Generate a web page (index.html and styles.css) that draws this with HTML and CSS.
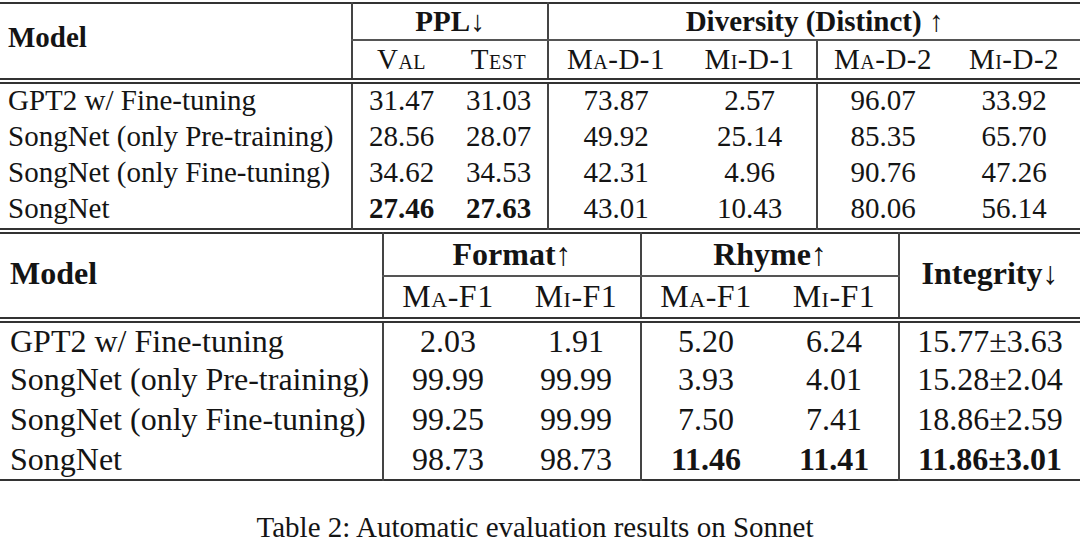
FILE: index.html
```html
<!DOCTYPE html>
<html>
<head>
<meta charset="utf-8">
<link rel="stylesheet" href="styles.css">
</head>
<body>
<div class="page">
  <table class="tbl top">
    <colgroup>
      <col style="width:352px"><col style="width:98px"><col style="width:98px">
      <col style="width:135px"><col style="width:134px"><col style="width:131px"><col style="width:132px">
    </colgroup>
    <tr class="h1">
      <th class="model" rowspan="2">Model</th>
      <th class="vl sub" colspan="2">PPL<span class="arr">↓</span></th>
      <th class="vl sub" colspan="4">Diversity (Distinct) <span class="arr">↑</span></th>
    </tr>
    <tr class="h2">
      <td class="vl sc">Val</td><td class="sc">Test</td>
      <td class="vl sc">Ma-D-1</td><td class="sc">Mi-D-1</td>
      <td class="vl sc">Ma-D-2</td><td class="sc">Mi-D-2</td>
    </tr>
    <tr class="d first">
      <td class="name">GPT2 w/ Fine-tuning</td>
      <td class="vl">31.47</td><td>31.03</td>
      <td class="vl">73.87</td><td>2.57</td>
      <td class="vl">96.07</td><td>33.92</td>
    </tr>
    <tr class="d">
      <td class="name">SongNet (only Pre-training)</td>
      <td class="vl">28.56</td><td>28.07</td>
      <td class="vl">49.92</td><td>25.14</td>
      <td class="vl">85.35</td><td>65.70</td>
    </tr>
    <tr class="d">
      <td class="name">SongNet (only Fine-tuning)</td>
      <td class="vl">34.62</td><td>34.53</td>
      <td class="vl">42.31</td><td>4.96</td>
      <td class="vl">90.76</td><td>47.26</td>
    </tr>
    <tr class="d last">
      <td class="name">SongNet</td>
      <td class="vl b">27.46</td><td class="b">27.63</td>
      <td class="vl">43.01</td><td>10.43</td>
      <td class="vl">80.06</td><td>56.14</td>
    </tr>
  </table>

  <table class="tbl bottom">
    <colgroup>
      <col style="width:383px"><col style="width:129px"><col style="width:129px">
      <col style="width:129px"><col style="width:129px"><col style="width:181px">
    </colgroup>
    <tr class="h1">
      <th class="model" rowspan="2">Model</th>
      <th class="vl sub" colspan="2">Format<span class="arr">↑</span></th>
      <th class="vl sub" colspan="2">Rhyme<span class="arr">↑</span></th>
      <th class="vl integ" rowspan="2">Integrity<span class="arr">↓</span></th>
    </tr>
    <tr class="h2">
      <td class="vl sc">Ma-F1</td><td class="sc">Mi-F1</td>
      <td class="vl sc">Ma-F1</td><td class="sc">Mi-F1</td>
    </tr>
    <tr class="d first">
      <td class="name">GPT2 w/ Fine-tuning</td>
      <td class="vl">2.03</td><td>1.91</td>
      <td class="vl">5.20</td><td>6.24</td>
      <td class="vl">15.77±3.63</td>
    </tr>
    <tr class="d">
      <td class="name">SongNet (only Pre-training)</td>
      <td class="vl">99.99</td><td>99.99</td>
      <td class="vl">3.93</td><td>4.01</td>
      <td class="vl">15.28±2.04</td>
    </tr>
    <tr class="d">
      <td class="name">SongNet (only Fine-tuning)</td>
      <td class="vl">99.25</td><td>99.99</td>
      <td class="vl">7.50</td><td>7.41</td>
      <td class="vl">18.86±2.59</td>
    </tr>
    <tr class="d last">
      <td class="name">SongNet</td>
      <td class="vl">98.73</td><td>98.73</td>
      <td class="vl b">11.46</td><td class="b">11.41</td>
      <td class="vl b">11.86±3.01</td>
    </tr>
  </table>

  <p class="caption">Table 2: Automatic evaluation results on Sonnet</p>
</div>
</body>
</html>
```

FILE: styles.css
```css
html, body {
  margin: 0;
  padding: 0;
  background: #ffffff;
}

.page {
  width: 1080px;
  height: 541px;
  padding-top: 2px;
  box-sizing: border-box;
  font-family: "Liberation Serif", "Times New Roman", serif;
  color: #141414;
  overflow: hidden;
}

.tbl {
  width: 1080px;
  border-collapse: collapse;
  table-layout: fixed;
  border-top: 2px solid #333;
  border-bottom: 2px solid #333;
}

.tbl th,
.tbl td {
  padding: 0;
  text-align: center;
  white-space: nowrap;
  vertical-align: middle;
}

.tbl th {
  font-weight: bold;
}

.tbl .model,
.tbl .name {
  text-align: left;
  padding-left: 8px;
}

.tbl .model {
  border-bottom: 6px double #333;
  padding-bottom: 8px;
}

.tbl .vl {
  border-left: 2px solid #444;
}

.tbl .sub {
  border-bottom: 2px solid #555;
}

.tbl .h2 td {
  border-bottom: 6px double #333;
}

.tbl .sc {
  font-variant: small-caps;
  letter-spacing: 0.5px;
}

.tbl .b {
  font-weight: bold;
}

.arr {
  font-weight: normal;
}

/* top table */
.top {
  font-size: 29px;
}
.top .h1 {
  height: 37px;
}
.top .h2 {
  height: 41px;
}
.top .d {
  height: 36.5px;
}
.top .d td {
  padding-bottom: 2px;
}

/* bottom table */
.bottom {
  margin-top: 2px;
  font-size: 32px;
}
.bottom .model,
.bottom .name {
  padding-left: 10px;
}
.bottom .model {
  padding-bottom: 4px;
}
.bottom .h1 {
  height: 43px;
}
.bottom .h2 {
  height: 44px;
}
.bottom .d {
  height: 40px;
}
.bottom .integ {
  border-bottom: 6px double #333;
  padding-bottom: 4px;
}

.caption {
  margin: 30px 0 0 0;
  text-align: center;
  font-size: 29px;
  line-height: 32px;
  padding-right: 10px;
}
```
